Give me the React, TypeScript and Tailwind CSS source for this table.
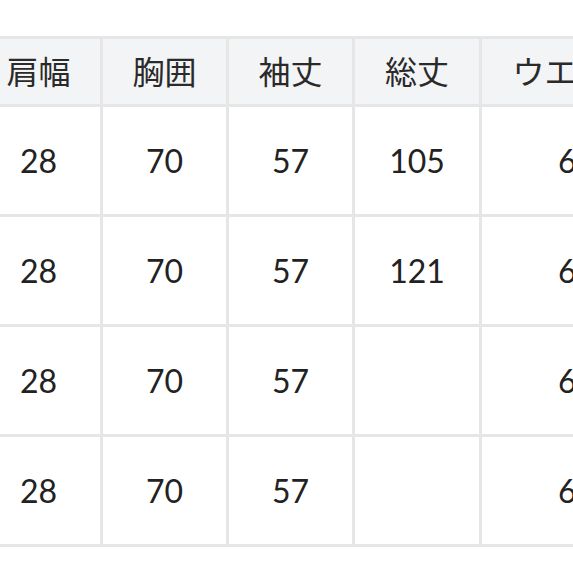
import React from "react";

const headers = ["肩幅", "胸囲", "袖丈", "総丈", "ウエスト"];
const rows = [
  ["28", "70", "57", "105", "62"],
  ["28", "70", "57", "121", "62"],
  ["28", "70", "57", "", "62"],
  ["28", "70", "57", "", "62"],
];

export default function App() {
  return (
    <div
      className="w-[573px] h-[573px] overflow-hidden bg-white pt-[36px]"
      style={{ fontFamily: 'Lato, "Noto Sans CJK JP", sans-serif' }}
    >
      <div className="ml-[-23px] grid w-max grid-cols-[126px_126px_126px_127px_192px] text-[32px] text-[#222222]">
        {headers.map((h) => (
          <div
            key={h}
            className="flex h-[71px] items-center justify-center border-t-[3px] border-r-[3px] border-b-[3px] border-[#e6e6e6] bg-[#f3f4f6] text-[#2a2a2a]"
          >
            {h}
          </div>
        ))}
        {rows.map((r, i) =>
          r.map((c, j) => (
            <div
              key={`${i}-${j}`}
              className="flex h-[110px] items-center justify-center border-r-[3px] border-b-[3px] border-[#e6e6e6] bg-white"
            >
              {c}
            </div>
          ))
        )}
      </div>
    </div>
  );
}
